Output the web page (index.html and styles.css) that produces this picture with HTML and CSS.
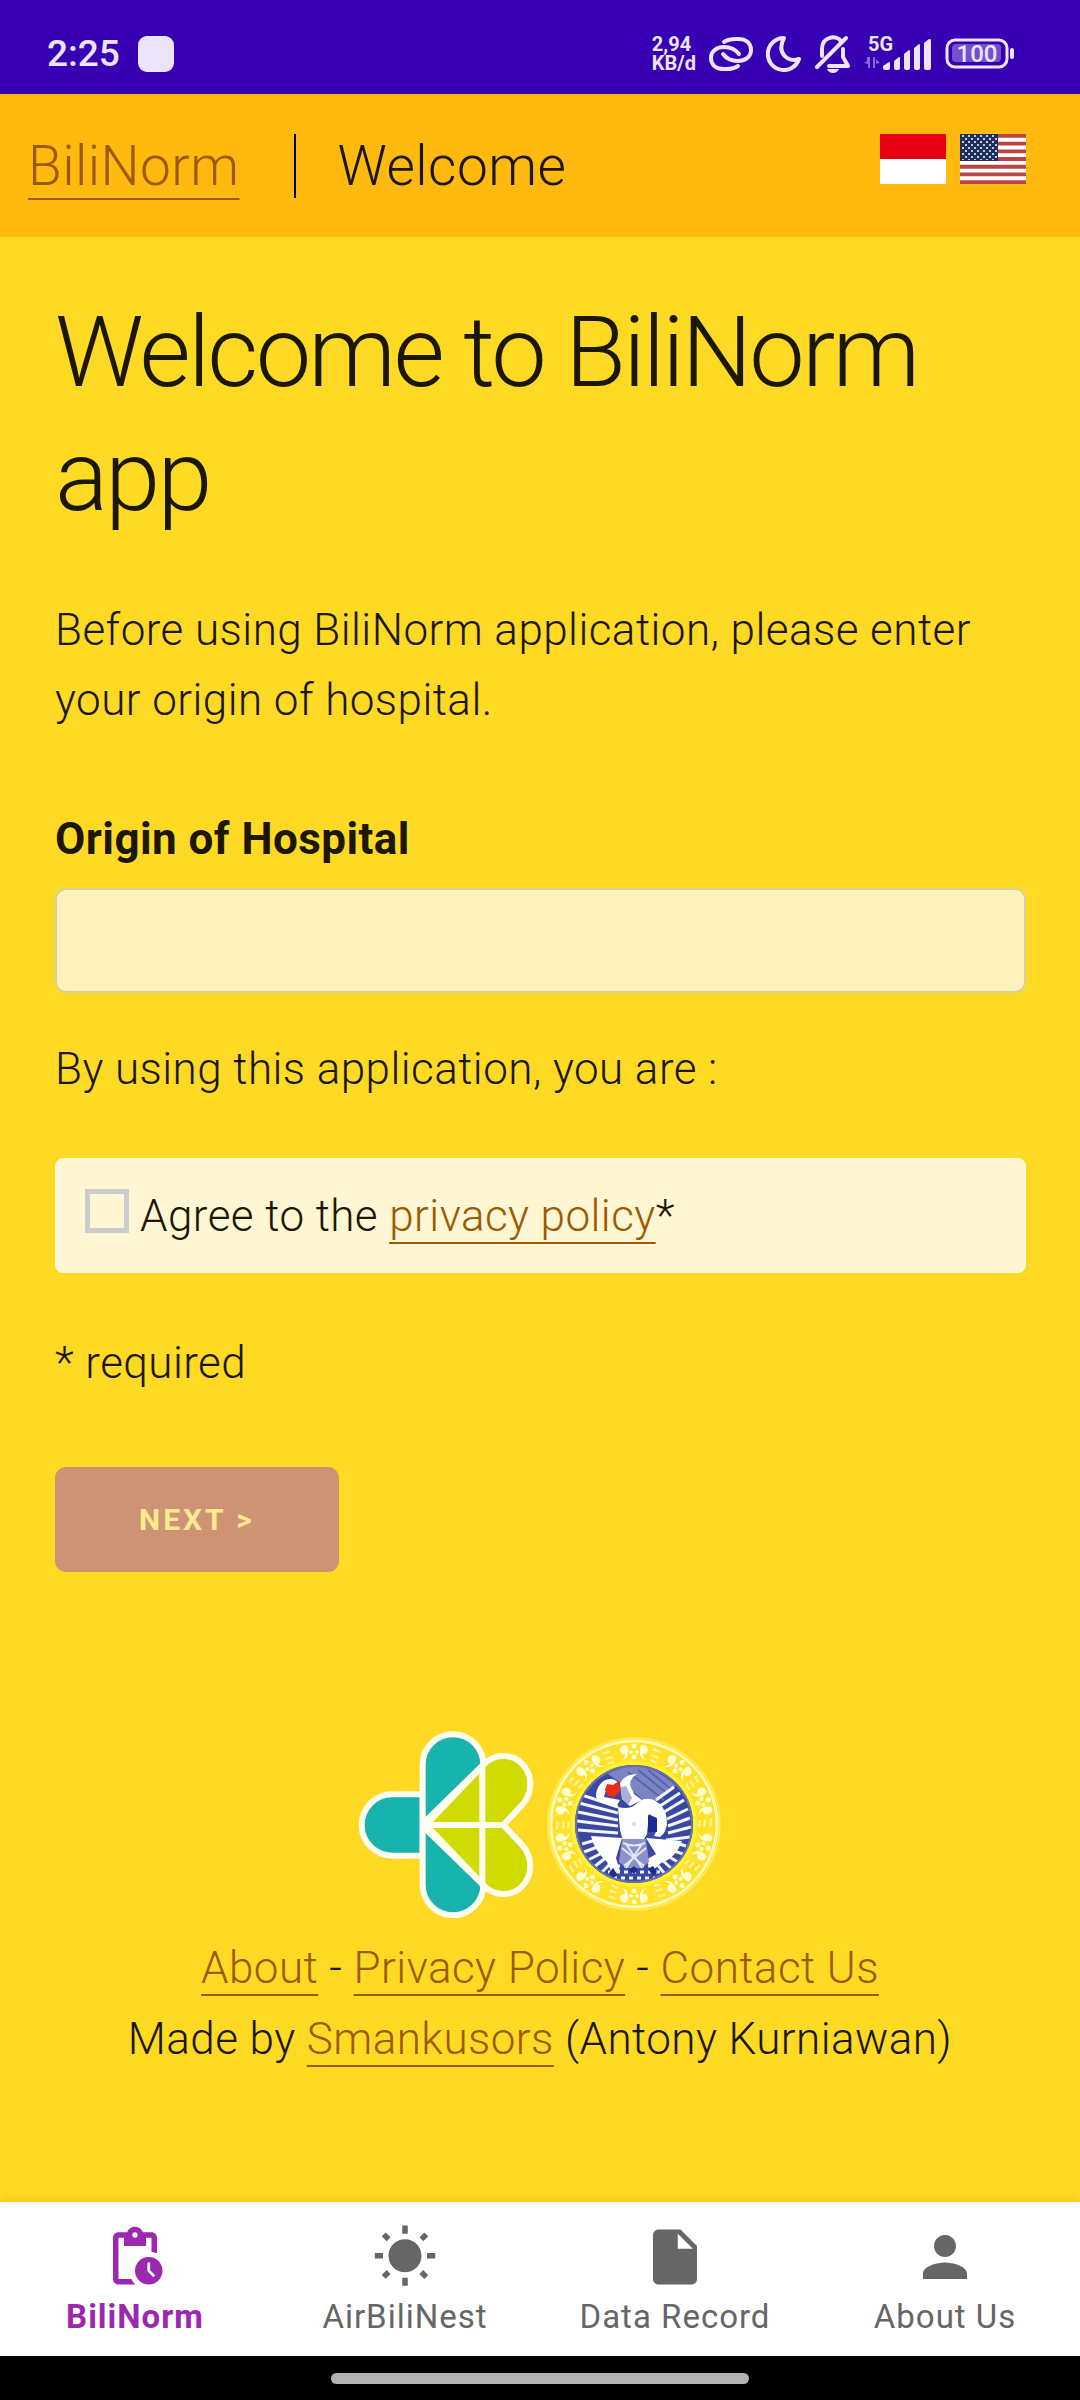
FILE: index.html
```html
<!DOCTYPE html>
<html lang="en">
<head>
<meta charset="utf-8">
<meta name="viewport" content="width=device-width, initial-scale=1">
<title>BiliNorm - Welcome</title>
<link rel="stylesheet" href="styles.css">
</head>
<body>
<div class="statusbar">
  <div class="status-left">
    <span class="clock">2:25</span>
    <span class="notice"></span>
  </div>
  <div class="status-right">
    <div class="speed"><span>2,94</span><span>KB/d</span></div>
    <svg class="link-icon" width="44" height="34" viewBox="0 0 44 34" fill="none" stroke="currentColor" stroke-width="4" stroke-linecap="round" aria-hidden="true">
      <path d="M15 5C18 3 20 2 27 2H29C37 2 42 6 42 13C42 20 36 24 29 24C22 24 17 21 14 17"/>
      <path d="M29 29C26 31 24 32 17 32H15C7 32 2 28 2 21C2 14 8 10 15 10C22 10 27 13 30 17"/>
    </svg>
    <svg class="moon-icon" width="36" height="36" viewBox="0 0 36 36" fill="none" stroke="currentColor" stroke-width="4" stroke-linejoin="round" aria-hidden="true">
      <path d="M18 2A16 16 0 1 0 33 23C22 27 10 17 18 2Z"/>
    </svg>
    <svg class="bell-icon" width="36" height="38" viewBox="0 0 36 38" fill="none" stroke="currentColor" stroke-width="4" stroke-linecap="round" stroke-linejoin="round" aria-hidden="true">
      <path d="M2 32L31 3M7 21V14C7 2 21 -1 26 6M28 14V22L33 31H14"/>
      <path d="M12 34H24Q22 38 18 38Q14 38 12 34Z" fill="currentColor" stroke="none"/>
    </svg>
    <svg class="signal-icon" width="68" height="46" viewBox="0 -6 68 46" fill="currentColor" aria-hidden="true">
      <text class="network" x="4" y="14">5G</text>
      <path opacity=".45" d="M3 20h3v11h-2v-4L0 26l3-2zM9 20h2v11h-2zM12 22l4 4h-1l-3 1z"/>
      <path d="M19 29l6-4q1 0 1 1v5q0 2-2 2h-3q-2 0-2-2zM30 24l5-4q1 0 1 1v10q0 2-2 2h-2q-2 0-2-2zM40 17l5-4q1 0 1 1v17q0 2-2 2h-2q-2 0-2-2zM50 11l5-4q1 0 1 1v23q0 2-2 2h-2q-2 0-2-2zM60 6l5-4q2 0 2 1v28q0 2-2 2h-3q-2 0-2-2z"/>
    </svg>
    <svg class="battery-icon" width="70" height="32" viewBox="0 0 70 32" fill="currentColor" aria-hidden="true">
      <rect x="2" y="2" width="60" height="27" rx="8" fill="none" stroke="currentColor" stroke-width="3"/>
      <rect x="7" y="6" width="49" height="18" rx="4" opacity=".35"/>
      <rect x="65" y="10" width="4" height="11" rx="2"/>
      <text class="charge" x="32" y="24" text-anchor="middle">100</text>
    </svg>
  </div>
</div>

<header class="topbar">
  <a class="link brand" href="#">BiliNorm</a>
  <span class="divider"></span>
  <span class="page-title">Welcome</span>
  <div class="languages">
    <button class="flag" type="button" aria-label="Bahasa Indonesia">
      <svg width="66" height="50" viewBox="0 0 66 50" aria-hidden="true"><path fill="#e70011" d="M0 0h66v25H0z"/><path fill="#fff" d="M0 25h66v25H0z"/></svg>
    </button>
    <button class="flag" type="button" aria-label="English">
      <svg width="66" height="50" viewBox="0 0 66 50" aria-hidden="true">
        <defs><pattern id="stars" width="6" height="6" patternUnits="userSpaceOnUse"><circle cx="3" cy="2" r="1" fill="#fff"/><circle cx="0" cy="5" r="1" fill="#fff"/><circle cx="6" cy="5" r="1" fill="#fff"/></pattern></defs>
        <path fill="#fff" d="M0 0h66v50H0z"/>
        <path stroke="#b94645" stroke-width="3.85" d="M0 1.9h66M0 9.6h66M0 17.3h66M0 25h66M0 32.7h66M0 40.4h66M0 48.1h66"/>
        <path fill="#1f305e" d="M0 0h38v27H0z"/><path fill="url(#stars)" d="M1 0h36v26H1z"/>
      </svg>
    </button>
  </div>
</header>

<main class="content">
  <h1>Welcome to BiliNorm app</h1>
  <p class="intro">Before using BiliNorm application, please enter your origin of hospital.</p>
  <form class="form">
    <label class="field-label" for="hospital">Origin of Hospital</label>
    <input class="field" id="hospital" type="text">
    <p class="terms">By using this application, you are :</p>
    <div class="agree">
      <input class="tick" id="agree" type="checkbox">
      <label for="agree">Agree to the <a class="link" href="#">privacy policy</a>*</label>
    </div>
    <p class="required">* required</p>
    <button class="next" type="submit" disabled>Next &gt;</button>
  </form>
</main>

<footer class="footer">
  <div class="logos">
    <svg width="176" height="188" viewBox="54 60 528 564" stroke="#fffef0" stroke-width="18" stroke-linejoin="round" role="img" aria-label="Ministry of Health">
      <g fill="#18b3ad">
        <path d="M248 253H157A92 92 0 0 0 157 437H248Z"/>
        <path d="M248 342V164A91 91 0 0 1 430 164Z"/>
        <path d="M248 348V525A91 91 0 0 0 430 525Z"/>
      </g>
      <g fill="#d0db02">
        <path d="M258 345L430 165C460 130 515 130 545 160C580 195 578 248 548 283L490 345Z"/>
        <path d="M258 345L430 525C460 560 515 560 545 530C580 495 578 442 548 407L490 345Z"/>
      </g>
      <path d="M427 168V522"/>
    </svg>
    <svg width="176" height="176" viewBox="-88 -88 176 176" role="img" aria-label="Airlangga University">
      <defs>
        <g id="bead" fill="#fffcd0">
          <path d="M-9 -79a5 5 0 0 0-5 5c0 3 3 5 5 4c0 3-1 5-4 6c6 0 8-6 7-11c0-2-1-4-3-4z"/>
          <path d="M9 -79a5 5 0 0 1 5 5c0 3-3 5-5 4c0 3 1 5 4 6c-6 0-8-6-7-11c0-2 1-4 3-4z"/>
          <circle cy="-78" r="2.5"/><circle cy="-67" r="2.5"/><circle cx="-3" cy="-72" r="2"/><circle cx="3" cy="-72" r="2"/>
          <path opacity=".7" d="M19 -76l7 3-1 2-7-3zM18 -70l7 3-1 2-7-3zM17 -65l6 3-1 2-6-3z"/>
        </g>
        <clipPath id="disc"><circle r="59"/></clipPath>
      </defs>
      <circle r="87" fill="#ffe12a"/>
      <circle r="86" fill="none" stroke="#fff27e" stroke-width="1"/>
      <circle r="83" fill="none" stroke="#fff9b4" stroke-width="3"/>
      <circle r="61" fill="none" stroke="#fff12c" stroke-width="4"/>
      <use href="#bead"/><use href="#bead" transform="rotate(38)"/><use href="#bead" transform="rotate(72)"/><use href="#bead" transform="rotate(108)"/><use href="#bead" transform="rotate(142)"/><use href="#bead" transform="rotate(180)"/><use href="#bead" transform="rotate(218)"/><use href="#bead" transform="rotate(252)"/><use href="#bead" transform="rotate(288)"/><use href="#bead" transform="rotate(322)"/>
      <circle r="59" fill="#3a48a2"/>
      <g clip-path="url(#disc)">
        <path fill="#7c85c2" d="M-26 -50Q8 -70 42 -38L16 -18L2 -30Z"/>
        <path stroke="#5763b0" stroke-width="2" d="M-6 -52L30 -24M4 -54L34 -30M14 -54L38 -34"/>
        <g stroke="#f4f5ff" stroke-width="3" fill="none">
          <path d="M-52 -29L-16 -17M-55 -21L-16 -11M-56 -12L-16 -4M-57 -3L-16 2M-56 6L-16 9"/>
          <path d="M22 -24L40 -37M26 -18L46 -31M30 -12L50 -24M33 -5L54 -15M34 2L56 -6M34 9L57 3M32 16L56 13"/>
          <path d="M-52 20L-38 16M-50 28L-34 22M-46 36L-30 28M-40 43L-26 32M-33 49L-22 38M52 22L38 18M49 30L34 25M44 38L30 30M38 45L26 34M31 50L21 38"/>
          <path stroke-dasharray="4 4" d="M-26 48H26M-21 54H21M-18 42H18"/>
        </g>
        <g fill="#fff">
          <path d="M-18 -17C-30 -20 -37 -22 -38 -28C-38 -36 -32 -45 -24 -45C-20 -45 -18 -44 -15 -40L-18 -34L-27 -37L-30 -27L-14 -24Z"/>
          <path d="M-14 -41Q-9 -50 3 -50Q-4 -46 -4 -39L0 -30L8 -24L-4 -18L-12 -25Z"/>
          <path d="M-16 -17Q-4 -14 2 -20Q10 -28 20 -24Q32 -18 33 -3Q33 8 26 13L20 12Q25 4 22 -6L15 -10L13 10L9 17H-11L-14 6Z"/>
          <path d="M-12 14L-18 34L-14 47L-22 49L-27 38Q-40 26 -43 12Z"/>
          <path d="M12 14L48 17Q42 34 27 39L18 47L12 36L22 30Z"/>
        </g>
        <path fill="#8a92c8" d="M-12 15H12L15 38L8 44H-8L-15 38Z"/>
        <path fill="#a7aed7" d="M-13 -37L-8 -38L-2 -26L-6 -19L-12 -26Z"/>
        <path fill="#1c2c90" d="M14 -9L23 -6V8H14ZM-25 49l4-5 4 6-4 5zM-5 46l5-4 4 4-4 4zM14 45l5-3 4 6-4 4z"/>
        <path fill="none" stroke="#e4e6f5" stroke-width="2" d="M-11 19Q0 24 11 19M-12 24L10 42M12 24L-10 42M-8 20L8 44M8 20L-8 44"/>
        <circle cx="0" r="2" fill="#d5d8ee"/>
        <path fill="#ee2a1a" d="M-27 -40L-21 -39L-15 -43L-14 -33L-19 -27L-26 -28L-29 -34Z"/>
      </g>
      <circle r="58" fill="none" stroke="#6570b8" stroke-width="2"/>
    </svg>
  </div>
  <p><a class="link" href="#">About</a> - <a class="link" href="#">Privacy Policy</a> - <a class="link" href="#">Contact Us</a></p>
  <p>Made by <a class="link" href="#">Smankusors</a> (Antony Kurniawan)</p>
</footer>

<nav class="tabs">
  <a class="tab tab-active" href="#" aria-current="page">
    <svg width="66" height="66" viewBox="0 0 24 24" fill="currentColor" aria-hidden="true"><path d="M17 12c-2.76 0-5 2.24-5 5s2.24 5 5 5 5-2.24 5-5-2.24-5-5-5zm1.65 7.35L16.5 17.2V14h1v2.79l1.85 1.85-.7.71zM18 3h-3.18C14.4 1.84 13.3 1 12 1s-2.4.84-2.82 2H6c-1.1 0-2 .9-2 2v15c0 1.1.9 2 2 2h6.11c-.59-.57-1.07-1.25-1.42-2H6V5h2v3h8V5h2v5.08c.71.1 1.38.31 2 .6V5c0-1.1-.9-2-2-2zm-6 2c-.55 0-1-.45-1-1s.45-1 1-1 1 .45 1 1-.45 1-1 1z"/></svg>
    <span>BiliNorm</span>
  </a>
  <a class="tab" href="#">
    <svg width="66" height="66" viewBox="0 0 24 24" fill="currentColor" aria-hidden="true"><path d="M6.76 4.84l-1.8-1.79-1.41 1.41 1.79 1.79 1.42-1.41zM4 10.5H1v2h3v-2zm9-9.95h-2V3.5h2V.55zm7.45 3.91l-1.41-1.41-1.79 1.79 1.41 1.41 1.79-1.79zm-3.21 13.7l1.79 1.8 1.41-1.41-1.8-1.79-1.4 1.4zM20 10.5v2h3v-2h-3zm-8-5c-3.31 0-6 2.69-6 6s2.69 6 6 6 6-2.69 6-6-2.69-6-6-6zm-1 16.95h2V19.5h-2v2.95zm-7.45-3.91l1.41 1.41 1.79-1.8-1.41-1.41-1.79 1.8z"/></svg>
    <span>AirBiliNest</span>
  </a>
  <a class="tab" href="#">
    <svg width="66" height="66" viewBox="0 0 24 24" fill="currentColor" aria-hidden="true"><path d="M6 2c-1.1 0-1.99.9-1.99 2L4 20c0 1.1.89 2 1.99 2H18c1.1 0 2-.9 2-2V8l-6-6H6zm7 7V3.5L18.5 9H13z"/></svg>
    <span>Data Record</span>
  </a>
  <a class="tab" href="#">
    <svg width="66" height="66" viewBox="0 0 24 24" fill="currentColor" aria-hidden="true"><path d="M12 12c2.21 0 4-1.79 4-4s-1.79-4-4-4-4 1.79-4 4 1.79 4 4 4zm0 2c-2.67 0-8 1.34-8 4v2h16v-2c0-2.66-5.33-4-8-4z"/></svg>
    <span>About Us</span>
  </a>
</nav>
<div class="gesture"><span class="handle"></span></div>
</body>
</html>
```
FILE: styles.css
```css
* {
  box-sizing: border-box;
}

body {
  margin: 0;
  min-height: 100vh;
  display: flex;
  flex-direction: column;
  background: #ffda24;
  color: #1c1703;
  font-family: Roboto, "Noto Sans", sans-serif;
  font-size: 44px;
  font-weight: 300;
  line-height: 70px;
  letter-spacing: 0.01em;
}

h1,
p {
  margin: 0;
}

svg {
  display: block;
}

.link {
  color: #9b5a00;
  text-decoration: underline;
  text-decoration-thickness: 2px;
  text-underline-offset: 11px;
  text-decoration-skip-ink: none;
}

/* System status bar */
.statusbar {
  display: flex;
  justify-content: space-between;
  align-items: center;
  height: 94px;
  padding: 14px 65px 0 47px;
  background: #3700b3;
  color: #ebe4fa;
  letter-spacing: 0;
}

.status-left,
.status-right {
  display: flex;
  align-items: center;
}

.status-left {
  gap: 18px;
}

.clock {
  font-size: 37px;
  font-weight: 500;
  line-height: 44px;
}

.notice {
  width: 36px;
  height: 36px;
  border-radius: 9px;
  background: #ebe4fa;
}

.status-right {
  gap: 13px;
}

.speed {
  display: flex;
  flex-direction: column;
  font-size: 20px;
  font-weight: 700;
  line-height: 19px;
}

.network {
  font-size: 20px;
  font-weight: 700;
}

.charge {
  font-size: 24px;
  font-weight: 500;
}

/* Application bar */
.topbar {
  display: flex;
  align-items: center;
  height: 143px;
  padding: 0 54px 0 28px;
  background: #ffb90f;
  font-size: 55px;
}

.brand {
  text-underline-offset: 13px;
}

.divider {
  width: 2px;
  height: 64px;
  margin: 0 42px 0 54px;
  background: #000;
}

.languages {
  display: flex;
  gap: 14px;
  margin-left: auto;
  padding-bottom: 14px;
}

.flag {
  padding: 0;
  border: 0;
  background: none;
}

/* Welcome form */
.content {
  padding: 53px 54px 0 55px;
}

h1 {
  margin-bottom: 57px;
  font-size: 99px;
  font-weight: 300;
  line-height: 124px;
  letter-spacing: -0.028em;
}

.intro {
  margin-bottom: 69px;
}

.form {
  display: flex;
  flex-direction: column;
  align-items: stretch;
}

.field-label {
  margin-bottom: 14px;
  font-weight: 700;
}

.field {
  height: 105px;
  margin-bottom: 41px;
  padding: 16px 27px;
  border: 2px solid #d9d0a0;
  border-radius: 11px;
  background: #fff2bd;
  color: inherit;
  font: inherit;
}

.terms {
  margin-bottom: 54px;
}

.agree {
  display: flex;
  gap: 11px;
  margin-bottom: 55px;
  padding: 22px 29px 21px;
  border: 1px solid #fffbe0;
  border-radius: 8px;
  background: #fff6d3;
}

.tick {
  appearance: none;
  width: 44px;
  height: 44px;
  margin: 8px 0 0;
  border: 5px solid #ccc;
}

.required {
  margin-bottom: 69px;
}

.next {
  align-self: flex-start;
  height: 105px;
  padding: 0 84px;
  border: 0;
  border-radius: 11px;
  background: #ce9275;
  color: #ffe98e;
  font-family: inherit;
  font-size: 30px;
  font-weight: 700;
  letter-spacing: 3px;
  text-transform: uppercase;
}

/* Footer */
.footer {
  margin-top: auto;
  padding: 55px 28px 127px;
  line-height: 71px;
  text-align: center;
}

.logos {
  display: flex;
  justify-content: center;
  align-items: center;
  gap: 12px;
  margin-bottom: 15px;
}

/* Bottom navigation */
.tabs {
  display: grid;
  grid-template-columns: repeat(4, 1fr);
  background: #fff;
  box-shadow: 0 -2px 12px rgba(120, 90, 0, 0.16);
}

.tab {
  display: flex;
  flex-direction: column;
  align-items: center;
  gap: 7px;
  padding: 22px 0 19px;
  color: #666;
  font-size: 33px;
  font-weight: 400;
  line-height: 40px;
  letter-spacing: 1px;
  text-decoration: none;
}

.tab-active {
  color: #9c27b0;
  font-weight: 700;
}

.gesture {
  display: flex;
  justify-content: center;
  padding: 17px 0 16px;
  background: #000;
}

.handle {
  width: 418px;
  height: 11px;
  border-radius: 6px;
  background: #b2b2b2;
}
```
